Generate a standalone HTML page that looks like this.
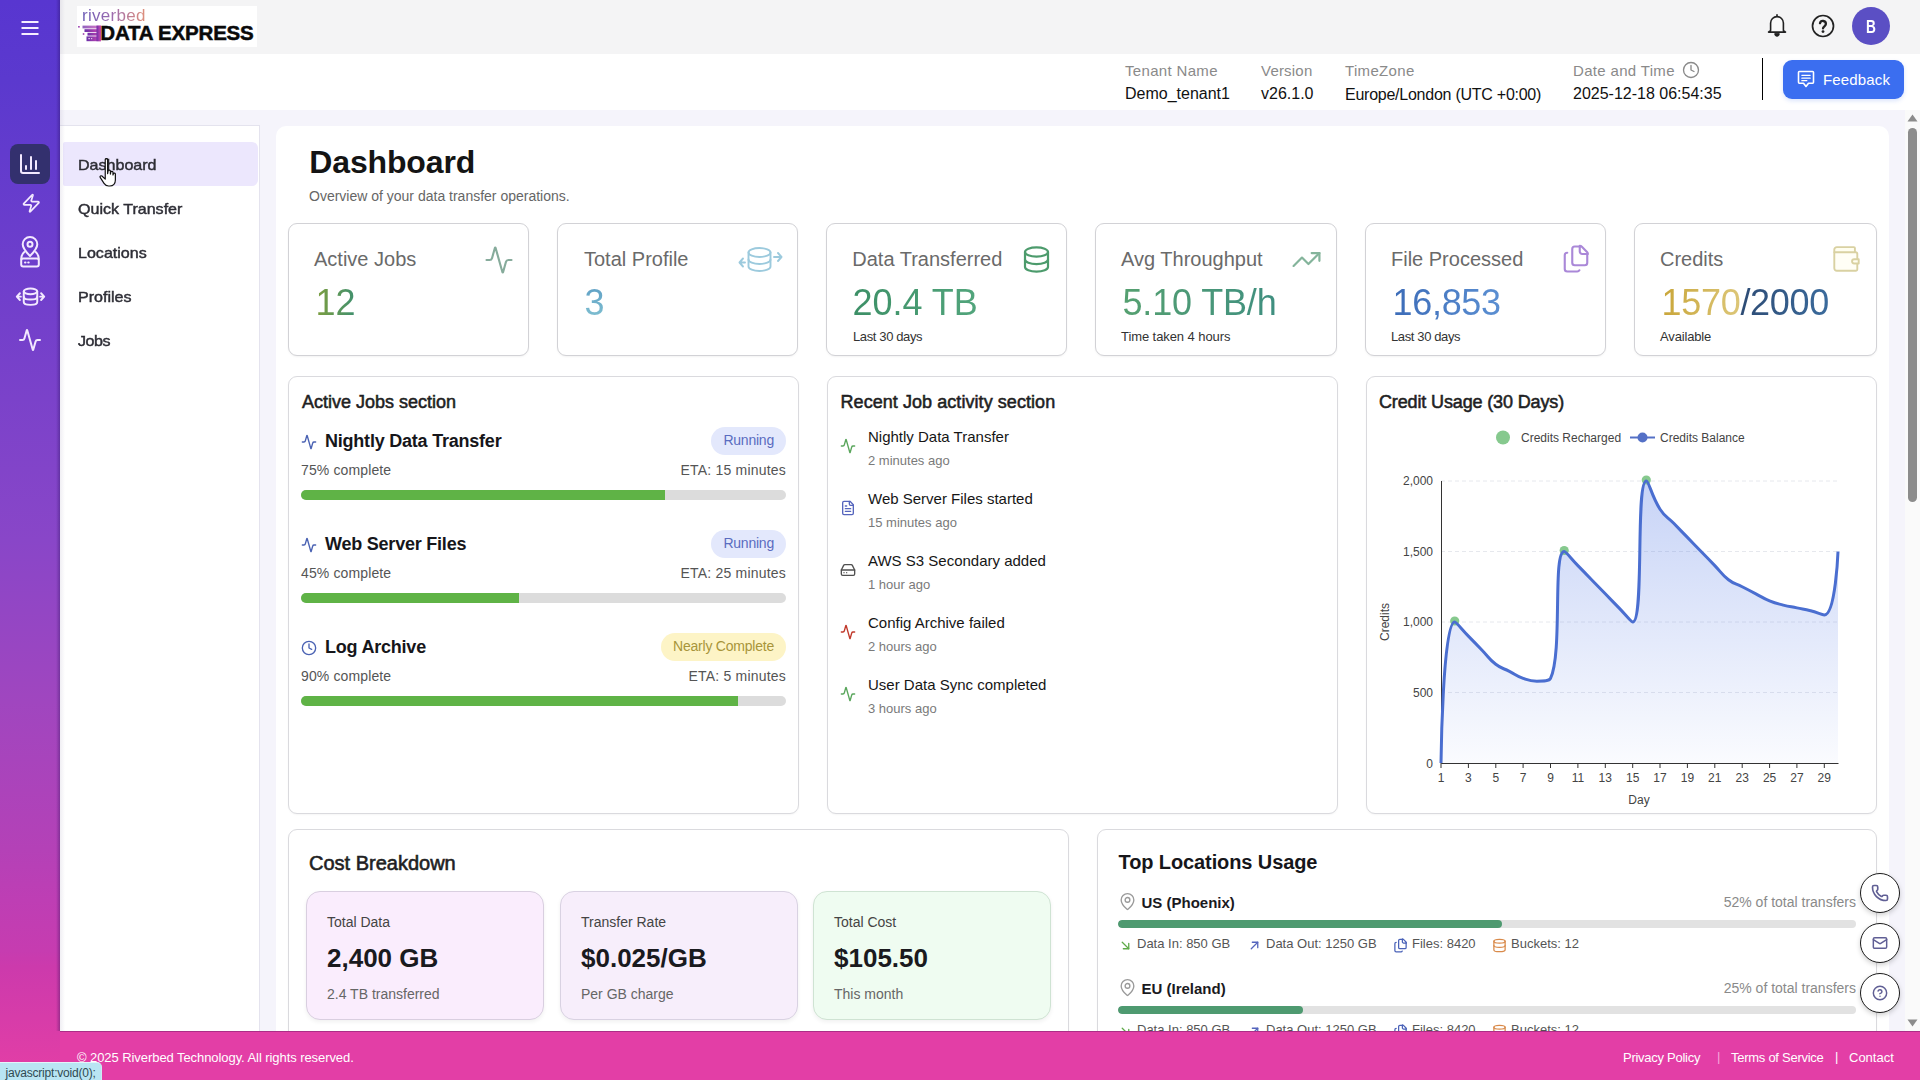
<!DOCTYPE html>
<html lang="en">
<head>
<meta charset="utf-8">
<title>Riverbed Data Express - Dashboard</title>
<style>
*{box-sizing:border-box;margin:0;padding:0}
html,body{width:1920px;height:1080px;overflow:hidden}
body{font-family:"Liberation Sans",sans-serif;position:relative;background:linear-gradient(180deg,#5836d0 0%,#5b39ce 7.400%,#8946c8 50%,#a046bf 65%,#b441b7 78.700%,#be3eb4 83.300%,#c63cb0 88%,#cc3aac 89.500%,#e23ea6 99%,#e23ea6 100%);color:#222}
.abs{position:absolute}
.t{position:absolute;white-space:nowrap;line-height:1}
svg{display:block;overflow:visible}
/* frame */
#topbar{left:60px;top:0;width:1860px;height:54px;background:#f4f4f5}
#infobar{left:60px;top:54px;width:1860px;height:56px;background:#fff}
#canvas{left:60px;top:110px;width:1860px;height:921px;background:#f5f4fb}
#navpanel{left:60px;top:125px;width:200px;height:906px;background:#fff;border-top:1px solid #e4e3ee;border-right:1px solid #e4e3ee}
#navsel{left:63px;top:142px;width:195px;height:44px;background:#ece7fd;border-radius:2px 6px 6px 2px}
#main{left:276px;top:126px;width:1613px;height:905px;background:#fff;border-radius:10px 10px 0 0}
#footer{left:0;top:1031px;width:1920px;height:49px}
#sbtrack{left:1905px;top:110px;width:15px;height:921px;background:#fafafa}
#sbthumb{left:1908px;top:128px;width:9px;height:374px;background:#8c8c8c;border-radius:5px}
.card{position:absolute;background:#fff;border:1px solid #d2d2d6;border-radius:9px;box-shadow:0 1px 2px rgba(0,0,0,.05)}
.sec{position:absolute;background:#fff;border:1px solid #dadade;border-radius:9px;box-shadow:0 1px 2px rgba(0,0,0,.04)}
.nv{font-size:15px;font-weight:400;color:#2e2e36;-webkit-text-stroke:0.45px #2e2e36;transform:scaleX(1.07);transform-origin:0 50%}
.cl{font-size:20px;color:#6a6a6a}
.cv{font-size:36px}
.cs{font-size:13px;color:#333}
.g{-webkit-background-clip:text;background-clip:text;color:transparent}
.sh{font-size:18px;font-weight:400;color:#1f1f23;-webkit-text-stroke:0.55px #1f1f23}
.jn{font-size:18px;font-weight:700;color:#16161a}
.jp{font-size:14px;color:#555}
.bdg{position:absolute;right:1134px;height:28px;line-height:27px;padding:0 12px;border-radius:14px;font-size:14px;letter-spacing:-0.22px;white-space:nowrap}
.run{background:#e3e8fc;color:#5a6cc0}
.near{background:#fdf4c6;color:#a8953a}
.pb{height:10px;border-radius:5px;background:#dcdcdc;overflow:hidden}
.pb i{display:block;height:100%;background:#5fb346}
.ra{font-size:15px;color:#161616}
.rb{font-size:13px;color:#7a7a7a}
.ax{font-size:12px;color:#444}
.ft{font-size:13px;color:#fff}
</style>
</head>
<body>
<div class="abs" id="topbar"></div>
<div class="abs" id="infobar"></div>
<div class="abs" id="canvas"></div>
<div class="abs" id="navpanel"></div>
<div class="abs" id="navsel"></div>
<div class="abs" id="main"></div>
<div class="abs" id="sbtrack"></div>
<div class="abs" id="sbthumb"></div>

<!--SIDEBAR-->
<svg class="abs" style="left:21px;top:20px" width="18" height="16" viewBox="0 0 18 16"><path d="M0.5 2h17M0.5 8h17M0.5 14h17" stroke="#f6eeff" stroke-width="2" fill="none"/></svg>
<div class="abs" style="left:10px;top:144px;width:40px;height:40px;border-radius:8px;background:#33306e"></div>
<svg class="abs" style="left:18px;top:152px" width="24" height="24" viewBox="0 0 24 24" fill="none" stroke="#f3e9ff" stroke-width="2" stroke-linecap="round" stroke-linejoin="round"><path d="M3 3v16a2 2 0 0 0 2 2h16"/><path d="M18 17V9"/><path d="M13 17V5"/><path d="M8 17v-3"/></svg>
<svg class="abs" style="left:20.700px;top:193px" width="20.500" height="20.500" viewBox="0 0 24 24" fill="none" stroke="#f3e9ff" stroke-width="2" stroke-linecap="round" stroke-linejoin="round"><path d="M4 14a1 1 0 0 1-.78-1.63l9.9-10.2a.5.5 0 0 1 .86.46l-1.92 6.02A1 1 0 0 0 13 10h7a1 1 0 0 1 .78 1.63l-9.9 10.2a.5.5 0 0 1-.86-.46l1.92-6.02A1 1 0 0 0 11 14z"/></svg>
<svg class="abs" style="left:18px;top:236px" width="24" height="32" viewBox="0 0 24 32" fill="none" stroke="#f3e9ff" stroke-width="2" stroke-linecap="round" stroke-linejoin="round"><path d="M12 20C8 16 4.700 12.500 4.700 8.300a7.300 7.300 0 0 1 14.600 0C19.300 12.500 16 16 12 20z"/><circle cx="12" cy="8.300" r="2.500"/><path d="M6.300 16C4.200 17.800 3.200 20.300 3.200 23"/><path d="M17.700 16c2.100 1.800 3.100 4.300 3.100 7"/><rect x="3.200" y="22.500" width="17.600" height="8" rx="2"/><path d="M7 26.500h.5M10.200 26.500h.5"/></svg>
<svg class="abs" style="left:15.500px;top:286.500px" width="29" height="19.300" viewBox="0 0 30 20" fill="none" stroke="#f3e9ff" stroke-width="2" stroke-linecap="round" stroke-linejoin="round"><ellipse cx="15" cy="4.500" rx="7" ry="3"/><path d="M8 4.500v11c0 1.700 3.100 3 7 3s7-1.300 7-3v-11"/><path d="M8 10c0 1.700 3.100 3 7 3s7-1.300 7-3"/><path d="M5 10H1.500M4 6.500.8 10 4 13.500"/><path d="M25 10h3.500M26 6.500 29.200 10 26 13.500"/></svg>
<svg class="abs" style="left:18px;top:328px" width="24" height="24" viewBox="0 0 24 24" fill="none" stroke="#f3e9ff" stroke-width="2" stroke-linecap="round" stroke-linejoin="round"><path d="M22 12h-2.480a2 2 0 0 0-1.930 1.460l-2.350 8.360a.25.250 0 0 1-.48 0L9.240 2.180a.25.250 0 0 0-.48 0l-2.350 8.360A2 2 0 0 1 4.490 12H2"/></svg>
<!--HEADER-->
<div class="abs" style="left:77px;top:6px;width:180px;height:41px;background:#fff"></div>
<div class="t" id="lg1" style="left:82px;top:7.200px;font-size:17px;letter-spacing:0.3px;background:linear-gradient(90deg,#6a5bb5 0%,#9a6ab0 45%,#e0907a 100%);-webkit-background-clip:text;background-clip:text;color:transparent">riverbed</div>
<svg class="abs" style="left:77px;top:25px" width="26" height="17" viewBox="0 0 26 17"><defs><linearGradient id="lgd" x1="0" y1="0" x2="1" y2="0"><stop offset="0" stop-color="#6a2fa8"/><stop offset="1" stop-color="#d04ab4"/></linearGradient></defs><g fill="url(#lgd)"><rect x="1.200" y="1" width="1.600" height="1.600"/><rect x="5.500" y="0.600" width="18.500" height="2.800" opacity=".75"/><rect x="7.500" y="4.200" width="16" height="2.800"/><rect x="5.800" y="8.200" width="1.600" height="1.600"/><rect x="10.500" y="7.800" width="13.500" height="2.800"/><rect x="9.500" y="11.400" width="14.500" height="4.800"/><rect x="19.500" y="0.600" width="4.500" height="15.600"/></g><rect x="11.500" y="13" width="1.200" height="1.200" fill="#fff"/><rect x="14" y="13" width="1.200" height="1.200" fill="#fff" opacity=".7"/></svg>
<div class="t" id="lg2" style="-webkit-text-stroke:0.5px #0a0a0a;left:100.300px;top:23.100px;font-size:20.500px;font-weight:700;color:#0a0a0a;letter-spacing:-0.2px">DATA EXPRESS</div>
<svg class="abs" style="left:1765px;top:13px" width="24" height="24" viewBox="0 0 24 24" fill="none" stroke="#222" stroke-width="1.600" stroke-linecap="round" stroke-linejoin="round"><path d="M12 1.800v1.400"/><path d="M5.600 17.500V10a6.400 6.400 0 0 1 12.800 0v7.500l2.100 1.600H3.500z" fill="#fafafa"/><path d="M9.700 21a2.300 2.300 0 0 0 4.600 0z" fill="#222" stroke-width="1"/></svg>
<svg class="abs" style="left:1811px;top:14px" width="24" height="24" viewBox="0 0 24 24" fill="none" stroke="#222" stroke-width="1.700" stroke-linecap="round" stroke-linejoin="round"><circle cx="12" cy="12" r="10.500"/><path d="M9 9.200a3 3 0 0 1 5.900.8c0 2-2.900 2.500-2.900 4.400" stroke-width="2.300"/><path d="M12 17.600h.01" stroke-width="2.800"/></svg>
<div class="abs" style="left:1852px;top:7px;width:38px;height:38px;border-radius:50%;background:#5b4fc4"></div>
<div class="t" id="avB" style="left:1851px;width:40px;text-align:center;top:17.500px;font-size:18px;font-weight:700;color:#fff;transform:scaleX(.76)">B</div>

<div class="t" id="h1a" style="left:1125px;top:63px;font-size:15px;color:#8a8a8a;letter-spacing:0.33px">Tenant Name</div>
<div class="t" id="h1b" style="left:1125px;top:86px;font-size:16px;color:#111">Demo_tenant1</div>
<div class="t" id="h2a" style="left:1261px;top:63px;font-size:15px;color:#8a8a8a;letter-spacing:0.2px">Version</div>
<div class="t" id="h2b" style="left:1261px;top:86px;font-size:16px;color:#111">v26.1.0</div>
<div class="t" id="h3a" style="left:1345px;top:63px;font-size:15px;color:#8a8a8a;letter-spacing:0.33px">TimeZone</div>
<div class="t" id="h3b" style="left:1345px;top:87px;font-size:16px;color:#111;letter-spacing:-0.25px">Europe/London (UTC +0:00)</div>
<div class="t" id="h4a" style="left:1573px;top:63px;font-size:15px;color:#8a8a8a;letter-spacing:0.33px">Date and Time</div>
<svg class="abs" style="left:1682px;top:61px" width="18" height="18" viewBox="0 0 24 24" fill="none" stroke="#8a8a8a" stroke-width="1.800" stroke-linecap="round" stroke-linejoin="round"><circle cx="12" cy="12" r="10"/><path d="M12 6v6l4 2"/></svg>
<div class="t" id="h4b" style="left:1573px;top:86px;font-size:16px;color:#111">2025-12-18 06:54:35</div>
<div class="abs" style="left:1762px;top:58px;width:1px;height:42px;background:#000"></div>
<div class="abs" style="left:1783px;top:60px;width:121px;height:39px;border-radius:9px;background:#3b6ef0;box-shadow:0 2px 4px rgba(59,110,240,.18)"></div>
<svg class="abs" style="left:1796px;top:69px" width="20" height="20" viewBox="0 0 24 24" fill="none" stroke="#fff" stroke-width="1.900" stroke-linecap="round" stroke-linejoin="round"><path d="M4 3h16a1 1 0 0 1 1 1v12a1 1 0 0 1-1 1h-5l-3 4-3-4H4a1 1 0 0 1-1-1V4a1 1 0 0 1 1-1z"/><path d="M7 7.500h10M7 11h10M7 14h6" stroke-width="1.500"/></svg>
<div class="t" id="fbk" style="left:1823px;top:72px;font-size:15px;color:#fff;letter-spacing:0.15px">Feedback</div>
<!--NAV-->
<div class="t nv" id="n1" style="left:78px;top:157px">Dashboard</div>
<div class="t nv" id="n2" style="left:78px;top:201px">Quick Transfer</div>
<div class="t nv" id="n3" style="left:78px;top:245px">Locations</div>
<div class="t nv" id="n4" style="left:78px;top:289px">Profiles</div>
<div class="t nv" id="n5" style="left:78px;top:333px;letter-spacing:-0.45px">Jobs</div>
<svg class="abs" style="left:99px;top:158.300px" width="18" height="29.500" viewBox="0 0 19 32"><path d="M6.500 1.500c0-1 2.600-1 2.600 0v15.500l.6-3.200c.2-.9 2.400-.7 2.400.3v3.300l.5-2.300c.2-.9 2.300-.6 2.300.4v2.900l.5-1.500c.3-.9 2.100-.5 2.100.5v6.500c0 3.700-2.300 6.500-6 6.500h-1.400c-2.300 0-3.700-1-4.900-2.800L1 21c-.7-1.100.9-2.300 1.900-1.400l3.600 3.300z" fill="#fff" stroke="#111" stroke-width="1.300" stroke-linejoin="round"/></svg>
<!--TITLE-->
<div class="t" id="ttl" style="left:309.300px;top:146px;font-size:32px;font-weight:700;color:#141414;letter-spacing:-0.15px">Dashboard</div>
<div class="t" id="sub" style="left:309px;top:189px;font-size:14px;color:#666">Overview of your data transfer operations.</div>
<!--CARDS-->
<div class="card" style="left:288px;top:223px;width:241px;height:133px"></div>
<div class="t cl" id="cl1" style="left:314px;top:249px">Active Jobs</div>
<div class="t cv" id="cv1" style="left:315.5px;top:285px"><span class="g" style="background-image:linear-gradient(90deg,#7d9e3e,#3f9070)">12</span></div>
<svg class="abs" style="left:484px;top:245px" width="30" height="30" viewBox="0 0 24 24" fill="none" stroke="#86ab9b" stroke-width="1.700" stroke-linecap="round" stroke-linejoin="round"><path d="M22 12h-2.480a2 2 0 0 0-1.930 1.460l-2.350 8.360a.25.250 0 0 1-.48 0L9.240 2.180a.25.250 0 0 0-.48 0l-2.350 8.360A2 2 0 0 1 4.490 12H2"/></svg>
<div class="card" style="left:557px;top:223px;width:241px;height:133px"></div>
<div class="t cl" id="cl2" style="left:584px;top:249px">Total Profile</div>
<div class="t cv" id="cv2" style="left:584.5px;top:285px"><span class="g" style="background-image:linear-gradient(180deg,#5b9cc4,#84c4d2)">3</span></div>
<svg class="abs" style="left:738px;top:246px" width="46" height="28" viewBox="0 0 46 28" fill="none" stroke="#9ccadd" stroke-width="1.900" stroke-linecap="round" stroke-linejoin="round"><ellipse cx="21.500" cy="6.500" rx="11" ry="4.500"/><path d="M10.500 6.500v14c0 2.500 4.900 4.500 11 4.500s11-2 11-4.500v-14"/><path d="M10.500 13.500c0 2.500 4.900 4.500 11 4.500s11-2 11-4.500"/><path d="M7 16.500H2.500M5 12.500 1.500 16.500l3.500 4"/><path d="M36 11H42.500M40 7l3.500 4-3.500 4"/></svg>
<div class="card" style="left:826px;top:223px;width:241px;height:133px"></div>
<div class="t cl" id="cl3" style="left:852.300px;top:249px">Data Transferred</div>
<div class="t cv" id="cv3" style="left:852.400px;top:285px"><span class="g" style="background-image:linear-gradient(90deg,#3c8f66,#52a57c)">20.4 TB</span></div>
<div class="t cs" id="cs3" style="left:853px;top:330px;letter-spacing:-0.38px">Last 30 days</div>
<svg class="abs" style="left:1022.500px;top:245.500px" width="27" height="27" viewBox="0 0 27 27" fill="none" stroke="#4c9b6c" stroke-width="2.200" stroke-linecap="round" stroke-linejoin="round"><ellipse cx="13.500" cy="6" rx="11.500" ry="4.600"/><path d="M2 6v15c0 2.500 5.100 4.600 11.500 4.600S25 23.500 25 21V6"/><path d="M2 13.500c0 2.500 5.100 4.600 11.500 4.600S25 16 25 13.500"/></svg>
<div class="card" style="left:1095px;top:223px;width:242px;height:133px"></div>
<div class="t cl" id="cl4" style="left:1121px;top:249px">Avg Throughput</div>
<div class="t cv" id="cv4" style="left:1122.5px;top:285px;letter-spacing:-0.15px"><span class="g" style="background-image:linear-gradient(90deg,#55a070,#3f8f80)">5.10 TB/h</span></div>
<div class="t cs" id="cs4" style="left:1121px;top:330px;letter-spacing:-0.08px">Time taken 4 hours</div>
<svg class="abs" style="left:1291px;top:244px" width="31" height="31" viewBox="0 0 24 24" fill="none" stroke="#84b49b" stroke-width="1.700" stroke-linecap="round" stroke-linejoin="round"><path d="M22 7 13.500 15.500l-5-5L2 17"/><path d="M16 7h6v6"/></svg>
<div class="card" style="left:1365px;top:223px;width:241px;height:133px"></div>
<div class="t cl" id="cl5" style="left:1391px;top:249px">File Processed</div>
<div class="t cv" id="cv5" style="left:1392.5px;top:285px;letter-spacing:-0.3px"><span class="g" style="background-image:linear-gradient(90deg,#3c6cb8,#5b8fd2)">16,853</span></div>
<div class="t cs" id="cs5" style="left:1391px;top:330px;letter-spacing:-0.38px">Last 30 days</div>
<svg class="abs" style="left:1561px;top:244px" width="30" height="30" viewBox="0 0 24 24" fill="none" stroke="#aa88d8" stroke-width="1.700" stroke-linecap="round" stroke-linejoin="round"><path d="M15 2h-4a2 2 0 0 0-2 2v11a2 2 0 0 0 2 2h8a2 2 0 0 0 2-2V8"/><path d="M16.700 2.200a2.400 2.400 0 0 0-1.700-.7V6a2 2 0 0 0 2 2h4.500a2.400 2.400 0 0 0-.7-1.700z" /><path d="M5 7a2 2 0 0 0-2 2v11a2 2 0 0 0 2 2h8a2 2 0 0 0 1.700-1"/></svg>
<div class="card" style="left:1634px;top:223px;width:243px;height:133px"></div>
<div class="t cl" id="cl6" style="left:1660px;top:249px">Credits</div>
<div class="t cv" id="cv6" style="left:1661.5px;top:285px;letter-spacing:-0.3px"><span class="g" style="background-image:linear-gradient(90deg,#c9a63a,#dcc678)">1570</span><span class="g" style="background-image:linear-gradient(90deg,#2d4b74,#3b6b9c)">/2000</span></div>
<div class="t cs" id="cs6" style="left:1660px;top:330px;letter-spacing:-0.15px">Available</div>
<svg class="abs" style="left:1833px;top:246px" width="27" height="26" viewBox="0 0 27 26" fill="none" stroke="#d9d1a2" stroke-width="1.900" stroke-linecap="round" stroke-linejoin="round"><path d="M1.300 6.300V3.600a2.500 2.500 0 0 1 2.500-2.500H20.900a1 1 0 0 1 1 1V6.300" fill="#fffef0"/><path d="M1.300 6.300H22.800a1.500 1.500 0 0 1 1.500 1.500V23.200a1.500 1.500 0 0 1-1.500 1.500H3.800a2.500 2.500 0 0 1-2.500-2.500z" fill="#fffef6"/><path d="M25.700 13.200H21.200a2.150 2.150 0 0 0 0 4.300H25.700z" fill="#fffef0"/></svg>
<!--ACTIVE-->
<div class="sec" style="left:288px;top:376px;width:511px;height:438px"></div>
<div class="t sh" id="sh1" style="left:302px;top:393.300px;font-size:18px;letter-spacing:0px">Active Jobs section</div>
<svg class="abs" style="left:301px;top:433.750px" width="16" height="16" viewBox="0 0 24 24" fill="none" stroke="#4a62b3" stroke-width="2" stroke-linecap="round" stroke-linejoin="round"><path d="M22 12h-2.480a2 2 0 0 0-1.930 1.460l-2.350 8.360a.25.250 0 0 1-.48 0L9.240 2.180a.25.250 0 0 0-.48 0l-2.350 8.360A2 2 0 0 1 4.490 12H2"/></svg>
<div class="t jn" id="jn0" style="left:325px;top:432.2px;letter-spacing:-0.22px">Nightly Data Transfer</div>
<div class="bdg run" id="bd0" style="top:427px">Running</div>
<div class="t jp" id="jp0" style="left:301px;top:463px;letter-spacing:0.13px">75% complete</div>
<div class="t jp" id="je0" style="right:1134px;top:463px;letter-spacing:0.2px">ETA: 15 minutes</div>
<div class="abs pb" style="left:301px;top:490px;width:485px"><i style="width:75%"></i></div>
<svg class="abs" style="left:301px;top:536.750px" width="16" height="16" viewBox="0 0 24 24" fill="none" stroke="#4a62b3" stroke-width="2" stroke-linecap="round" stroke-linejoin="round"><path d="M22 12h-2.480a2 2 0 0 0-1.930 1.460l-2.350 8.360a.25.250 0 0 1-.48 0L9.240 2.180a.25.250 0 0 0-.48 0l-2.350 8.360A2 2 0 0 1 4.490 12H2"/></svg>
<div class="t jn" id="jn1" style="left:325px;top:535.2px;letter-spacing:-0.22px">Web Server Files</div>
<div class="bdg run" id="bd1" style="top:530px">Running</div>
<div class="t jp" id="jp1" style="left:301px;top:566px;letter-spacing:0.13px">45% complete</div>
<div class="t jp" id="je1" style="right:1134px;top:566px;letter-spacing:0.2px">ETA: 25 minutes</div>
<div class="abs pb" style="left:301px;top:593px;width:485px"><i style="width:45%"></i></div>
<svg class="abs" style="left:301px;top:639.750px" width="16" height="16" viewBox="0 0 24 24" fill="none" stroke="#4a62b3" stroke-width="2" stroke-linecap="round" stroke-linejoin="round"><circle cx="12" cy="12" r="10"/><path d="M12 6v6l4 2"/></svg>
<div class="t jn" id="jn2" style="left:325px;top:638.2px;letter-spacing:-0.22px">Log Archive</div>
<div class="bdg near" id="bd2" style="top:633px">Nearly Complete</div>
<div class="t jp" id="jp2" style="left:301px;top:669px;letter-spacing:0.13px">90% complete</div>
<div class="t jp" id="je2" style="right:1134px;top:669px;letter-spacing:0.2px">ETA: 5 minutes</div>
<div class="abs pb" style="left:301px;top:696px;width:485px"><i style="width:90%"></i></div>
<!--RECENT-->
<div class="sec" style="left:827px;top:376px;width:511px;height:438px"></div>
<div class="t sh" id="sh2" style="left:840.500px;top:393.300px;font-size:18px;letter-spacing:0.06px">Recent Job activity section</div>
<svg class="abs" style="left:840px;top:438px" width="16" height="16" viewBox="0 0 24 24" fill="none" stroke="#5aa65c" stroke-width="2" stroke-linecap="round" stroke-linejoin="round"><path d="M22 12h-2.480a2 2 0 0 0-1.930 1.460l-2.350 8.360a.25.250 0 0 1-.48 0L9.240 2.180a.25.250 0 0 0-.48 0l-2.350 8.360A2 2 0 0 1 4.490 12H2"/></svg>
<div class="t ra" id="ra0" style="left:868px;top:429px">Nightly Data Transfer</div>
<div class="t rb" id="rb0" style="left:868px;top:454px">2 minutes ago</div>
<svg class="abs" style="left:840px;top:500px" width="16" height="16" viewBox="0 0 24 24" fill="none" stroke="#5565bd" stroke-width="2" stroke-linecap="round" stroke-linejoin="round"><path d="M15 2H6a2 2 0 0 0-2 2v16a2 2 0 0 0 2 2h12a2 2 0 0 0 2-2V7z"/><path d="M14 2v4a2 2 0 0 0 2 2h4"/><path d="M10 9H8"/><path d="M16 13H8"/><path d="M16 17H8"/></svg>
<div class="t ra" id="ra1" style="left:868px;top:491px">Web Server Files started</div>
<div class="t rb" id="rb1" style="left:868px;top:516px">15 minutes ago</div>
<svg class="abs" style="left:840px;top:562px" width="16" height="16" viewBox="0 0 24 24" fill="none" stroke="#505050" stroke-width="2" stroke-linecap="round" stroke-linejoin="round"><line x1="22" x2="2" y1="12" y2="12"/><path d="M5.450 5.110 2 12v6a2 2 0 0 0 2 2h16a2 2 0 0 0 2-2v-6l-3.450-6.890A2 2 0 0 0 16.760 4H7.240a2 2 0 0 0-1.790 1.110z"/><line x1="6" x2="6.010" y1="16" y2="16"/><line x1="10" x2="10.010" y1="16" y2="16"/></svg>
<div class="t ra" id="ra2" style="left:868px;top:553px">AWS S3 Secondary added</div>
<div class="t rb" id="rb2" style="left:868px;top:578px">1 hour ago</div>
<svg class="abs" style="left:840px;top:624px" width="16" height="16" viewBox="0 0 24 24" fill="none" stroke="#c0392b" stroke-width="2" stroke-linecap="round" stroke-linejoin="round"><path d="M22 12h-2.480a2 2 0 0 0-1.930 1.460l-2.350 8.360a.25.250 0 0 1-.48 0L9.240 2.180a.25.250 0 0 0-.48 0l-2.350 8.360A2 2 0 0 1 4.490 12H2"/></svg>
<div class="t ra" id="ra3" style="left:868px;top:615px">Config Archive failed</div>
<div class="t rb" id="rb3" style="left:868px;top:640px">2 hours ago</div>
<svg class="abs" style="left:840px;top:686px" width="16" height="16" viewBox="0 0 24 24" fill="none" stroke="#5aa65c" stroke-width="2" stroke-linecap="round" stroke-linejoin="round"><path d="M22 12h-2.480a2 2 0 0 0-1.930 1.460l-2.350 8.360a.25.250 0 0 1-.48 0L9.240 2.180a.25.250 0 0 0-.48 0l-2.350 8.360A2 2 0 0 1 4.490 12H2"/></svg>
<div class="t ra" id="ra4" style="left:868px;top:677px">User Data Sync completed</div>
<div class="t rb" id="rb4" style="left:868px;top:702px">3 hours ago</div>
<!--CHART-->
<div class="sec" style="left:1366px;top:376px;width:511px;height:438px"></div>
<div class="t sh" id="sh3" style="left:1379px;top:393.300px;font-size:18px;letter-spacing:-0.14px">Credit Usage (30 Days)</div>
<svg class="abs" style="left:0;top:0" width="1920" height="1080" viewBox="0 0 1920 1080">
<defs><linearGradient id="ag" x1="0" y1="481" x2="0" y2="763" gradientUnits="userSpaceOnUse"><stop offset="0" stop-color="#5b7fe6" stop-opacity=".34"/><stop offset="1" stop-color="#5b7fe6" stop-opacity=".03"/></linearGradient></defs>
<path d="M1441 692.5H1838" stroke="#dfe2e8" stroke-width="0.800" stroke-dasharray="4 3"/>
<path d="M1441 622.0H1838" stroke="#dfe2e8" stroke-width="0.800" stroke-dasharray="4 3"/>
<path d="M1441 551.5H1838" stroke="#dfe2e8" stroke-width="0.800" stroke-dasharray="4 3"/>
<path d="M1441 481.0H1838" stroke="#dfe2e8" stroke-width="0.800" stroke-dasharray="4 3"/>
<path d="M1441.00,763.00 C1441.00,763.00 1442.67,622.00 1454.69,622.00 C1456.36,622.00 1461.54,629.05 1468.38,636.10 C1475.23,643.15 1475.22,643.15 1482.07,650.20 C1488.91,657.25 1488.08,658.37 1495.76,664.30 C1501.77,668.95 1502.61,667.83 1509.45,671.35 C1516.30,674.88 1515.96,675.81 1523.14,678.40 C1529.65,680.75 1529.98,681.22 1536.83,681.22 C1543.67,681.22 1549.17,681.22 1550.52,678.40 C1562.86,652.65 1552.35,551.50 1564.21,551.50 C1566.04,551.50 1571.06,558.55 1577.90,565.60 C1584.75,572.65 1584.74,572.65 1591.59,579.70 C1598.43,586.75 1598.43,586.75 1605.28,593.80 C1612.12,600.85 1612.12,600.85 1618.97,607.90 C1625.82,614.95 1630.99,622.00 1632.66,622.00 C1644.68,622.00 1635.14,481.00 1646.35,481.00 C1648.83,481.00 1651.63,496.20 1660.04,509.20 C1665.32,517.35 1666.88,516.25 1673.73,523.30 C1680.58,530.35 1680.58,530.35 1687.42,537.40 C1694.27,544.45 1694.27,544.45 1701.11,551.50 C1707.96,558.55 1707.95,558.55 1714.80,565.60 C1721.64,572.65 1720.81,573.77 1728.49,579.70 C1734.50,584.35 1735.34,583.23 1742.18,586.75 C1749.03,590.27 1749.02,590.27 1755.87,593.80 C1762.71,597.33 1762.47,597.93 1769.56,600.85 C1776.16,603.57 1776.32,603.30 1783.25,605.08 C1790.01,606.82 1790.10,606.49 1796.94,607.90 C1803.79,609.31 1803.87,608.98 1810.63,610.72 C1817.56,612.50 1821.84,614.95 1824.32,614.95 C1835.53,614.95 1838.01,551.50 1838.01,551.50 L1838,763 L1441,763 Z" fill="url(#ag)"/>
<path d="M1441.500 481V763.500H1838.500" fill="none" stroke="#333" stroke-width="1"/>
<circle cx="1454.7" cy="621.0" r="4.600" fill="#86c98e"/>
<circle cx="1564.2" cy="550.5" r="4.600" fill="#86c98e"/>
<circle cx="1646.3" cy="480.0" r="4.600" fill="#86c98e"/>
<path d="M1441.00,763.00 C1441.00,763.00 1442.67,622.00 1454.69,622.00 C1456.36,622.00 1461.54,629.05 1468.38,636.10 C1475.23,643.15 1475.22,643.15 1482.07,650.20 C1488.91,657.25 1488.08,658.37 1495.76,664.30 C1501.77,668.95 1502.61,667.83 1509.45,671.35 C1516.30,674.88 1515.96,675.81 1523.14,678.40 C1529.65,680.75 1529.98,681.22 1536.83,681.22 C1543.67,681.22 1549.17,681.22 1550.52,678.40 C1562.86,652.65 1552.35,551.50 1564.21,551.50 C1566.04,551.50 1571.06,558.55 1577.90,565.60 C1584.75,572.65 1584.74,572.65 1591.59,579.70 C1598.43,586.75 1598.43,586.75 1605.28,593.80 C1612.12,600.85 1612.12,600.85 1618.97,607.90 C1625.82,614.95 1630.99,622.00 1632.66,622.00 C1644.68,622.00 1635.14,481.00 1646.35,481.00 C1648.83,481.00 1651.63,496.20 1660.04,509.20 C1665.32,517.35 1666.88,516.25 1673.73,523.30 C1680.58,530.35 1680.58,530.35 1687.42,537.40 C1694.27,544.45 1694.27,544.45 1701.11,551.50 C1707.96,558.55 1707.95,558.55 1714.80,565.60 C1721.64,572.65 1720.81,573.77 1728.49,579.70 C1734.50,584.35 1735.34,583.23 1742.18,586.75 C1749.03,590.27 1749.02,590.27 1755.87,593.80 C1762.71,597.33 1762.47,597.93 1769.56,600.85 C1776.16,603.57 1776.32,603.30 1783.25,605.08 C1790.01,606.82 1790.10,606.49 1796.94,607.90 C1803.79,609.31 1803.87,608.98 1810.63,610.72 C1817.56,612.50 1821.84,614.95 1824.32,614.95 C1835.53,614.95 1838.01,551.50 1838.01,551.50" fill="none" stroke="#4a6ed0" stroke-width="3" stroke-linejoin="round"/>
<path d="M1441.0 763v5M1468.4 763v5M1495.8 763v5M1523.1 763v5M1550.5 763v5M1577.9 763v5M1605.3 763v5M1632.7 763v5M1660.0 763v5M1687.4 763v5M1714.8 763v5M1742.2 763v5M1769.6 763v5M1796.9 763v5M1824.3 763v5" stroke="#333" stroke-width="1"/>
<circle cx="1503" cy="437.500" r="7" fill="#86c98e"/>
<path d="M1630 437.500h25" stroke="#5470c6" stroke-width="2"/><circle cx="1642.500" cy="437.500" r="5" fill="#5470c6"/>
</svg>
<div class="t ax" style="right:487px;top:758.300px">0</div>
<div class="t ax" style="right:487px;top:686.5px">500</div>
<div class="t ax" style="right:487px;top:616.0px">1,000</div>
<div class="t ax" style="right:487px;top:545.5px">1,500</div>
<div class="t ax" style="right:487px;top:475.0px">2,000</div>
<div class="t ax" style="left:1421.0px;width:40px;text-align:center;top:772px">1</div>
<div class="t ax" style="left:1448.4px;width:40px;text-align:center;top:772px">3</div>
<div class="t ax" style="left:1475.8px;width:40px;text-align:center;top:772px">5</div>
<div class="t ax" style="left:1503.1px;width:40px;text-align:center;top:772px">7</div>
<div class="t ax" style="left:1530.5px;width:40px;text-align:center;top:772px">9</div>
<div class="t ax" style="left:1557.9px;width:40px;text-align:center;top:772px">11</div>
<div class="t ax" style="left:1585.3px;width:40px;text-align:center;top:772px">13</div>
<div class="t ax" style="left:1612.7px;width:40px;text-align:center;top:772px">15</div>
<div class="t ax" style="left:1640.0px;width:40px;text-align:center;top:772px">17</div>
<div class="t ax" style="left:1667.4px;width:40px;text-align:center;top:772px">19</div>
<div class="t ax" style="left:1694.8px;width:40px;text-align:center;top:772px">21</div>
<div class="t ax" style="left:1722.2px;width:40px;text-align:center;top:772px">23</div>
<div class="t ax" style="left:1749.6px;width:40px;text-align:center;top:772px">25</div>
<div class="t ax" style="left:1776.9px;width:40px;text-align:center;top:772px">27</div>
<div class="t ax" style="left:1804.3px;width:40px;text-align:center;top:772px">29</div>
<div class="t ax" id="axd" style="left:1619px;width:40px;text-align:center;top:794px">Day</div>
<div class="t ax" id="axc" style="left:1365px;top:616px;width:40px;text-align:center;transform:rotate(-90deg)">Credits</div>
<div class="t ax" id="lgA" style="left:1521px;top:432px">Credits Recharged</div>
<div class="t ax" id="lgB" style="left:1660px;top:432px">Credits Balance</div>
<!--COST-->
<div class="abs" style="left:276px;top:820px;width:1613px;height:211px;overflow:hidden">
<div class="sec" style="left:12px;top:9px;width:781px;height:260px"></div>
<div class="t" id="cbh" style="left:33px;top:32.500px;font-size:20px;font-weight:400;color:#1f1f23;-webkit-text-stroke:0.6px #1f1f23;letter-spacing:0px">Cost Breakdown</div>
<div class="abs" style="left:30px;top:71px;width:238px;height:129px;border-radius:14px;background:#faedfd;border:1px solid #d9cfe0;box-shadow:0 2px 4px rgba(0,0,0,.06)"></div>
<div class="t" id="ca0" style="left:51px;top:95px;font-size:14px;color:#444">Total Data</div>
<div class="t" id="cb0" style="left:51px;top:124.5px;font-size:26px;font-weight:700;color:#1a1a1e">2,400 GB</div>
<div class="t" id="cc0" style="left:51px;top:167px;font-size:14px;color:#666">2.4 TB transferred</div>
<div class="abs" style="left:284px;top:71px;width:238px;height:129px;border-radius:14px;background:#f7eefb;border:1px solid #d9d2e2;box-shadow:0 2px 4px rgba(0,0,0,.06)"></div>
<div class="t" id="ca1" style="left:305px;top:95px;font-size:14px;color:#444">Transfer Rate</div>
<div class="t" id="cb1" style="left:305px;top:124.5px;font-size:26px;font-weight:700;color:#1a1a1e">$0.025/GB</div>
<div class="t" id="cc1" style="left:305px;top:167px;font-size:14px;color:#666">Per GB charge</div>
<div class="abs" style="left:537px;top:71px;width:238px;height:129px;border-radius:14px;background:#effcf1;border:1px solid #cfe3d3;box-shadow:0 2px 4px rgba(0,0,0,.06)"></div>
<div class="t" id="ca2" style="left:558px;top:95px;font-size:14px;color:#444">Total Cost</div>
<div class="t" id="cb2" style="left:558px;top:124.5px;font-size:26px;font-weight:700;color:#1a1a1e">$105.50</div>
<div class="t" id="cc2" style="left:558px;top:167px;font-size:14px;color:#666">This month</div>
<div class="sec" style="left:821px;top:9px;width:780px;height:260px"></div>
<div class="t" id="tlh" style="left:842.500px;top:32px;font-size:20px;font-weight:700;color:#16161a;letter-spacing:-0.1px">Top Locations Usage</div>
<svg class="abs" style="left:842px;top:72px" width="19" height="19" viewBox="0 0 24 24" fill="none" stroke="#9a9a9a" stroke-width="1.7" stroke-linecap="round" stroke-linejoin="round"><path d="M20 10c0 4.990-5.540 10.190-7.400 11.800a1 1 0 0 1-1.200 0C9.540 20.190 4 14.990 4 10a8 8 0 0 1 16 0"/><circle cx="12" cy="10" r="3"/></svg>
<div class="t" id="ln0" style="left:865.500px;top:74.6px;font-size:15px;font-weight:700;color:#1a1a1e">US (Phoenix)</div>
<div class="t" id="lp0" style="right:33px;top:75px;font-size:14px;color:#8a8a8a">52% of total transfers</div>
<div class="abs" style="left:842px;top:100px;width:738px;height:8px;border-radius:4px;background:#e2e2e2;overflow:hidden"><i style="display:block;height:100%;width:52%;background:#4e9a70;border-radius:4px"></i></div>
<svg class="abs" style="left:843px;top:118.5px" width="13" height="13" viewBox="0 0 24 24" fill="none" stroke="#5faa4a" stroke-width="2.4" stroke-linecap="round" stroke-linejoin="round"><path d="M6 6l12 12"/><path d="M18 8v10H8"/></svg>
<svg class="abs" style="left:972px;top:118.5px" width="13" height="13" viewBox="0 0 24 24" fill="none" stroke="#5565bd" stroke-width="2.4" stroke-linecap="round" stroke-linejoin="round"><path d="M6 18L18 6"/><path d="M8 6h10v10"/></svg>
<svg class="abs" style="left:1117px;top:118px" width="15" height="15" viewBox="0 0 24 24" fill="none" stroke="#4a62b8" stroke-width="2" stroke-linecap="round" stroke-linejoin="round"><path d="M15 2h-4a2 2 0 0 0-2 2v11a2 2 0 0 0 2 2h8a2 2 0 0 0 2-2V8"/><path d="M16.700 2.200a2.400 2.400 0 0 0-1.700-.7V6a2 2 0 0 0 2 2h4.500a2.400 2.400 0 0 0-.7-1.700z"/><path d="M5 7a2 2 0 0 0-2 2v11a2 2 0 0 0 2 2h8a2 2 0 0 0 1.700-1"/></svg>
<svg class="abs" style="left:1216px;top:118px" width="15" height="15" viewBox="0 0 24 24" fill="none" stroke="#d98a4a" stroke-width="2" stroke-linecap="round" stroke-linejoin="round"><ellipse cx="12" cy="5" rx="9" ry="3"/><path d="M3 5v14a9 3 0 0 0 18 0V5"/><path d="M3 12a9 3 0 0 0 18 0"/></svg>
<div class="t" id="ls00" style="left:861px;top:116.75px;font-size:13px;color:#555">Data In: 850 GB</div>
<div class="t" id="ls01" style="left:990px;top:116.75px;font-size:13px;color:#555">Data Out: 1250 GB</div>
<div class="t" id="ls02" style="left:1136px;top:116.75px;font-size:13px;color:#555">Files: 8420</div>
<div class="t" id="ls03" style="left:1235px;top:116.75px;font-size:13px;color:#555">Buckets: 12</div>
<svg class="abs" style="left:842px;top:158px" width="19" height="19" viewBox="0 0 24 24" fill="none" stroke="#9a9a9a" stroke-width="1.7" stroke-linecap="round" stroke-linejoin="round"><path d="M20 10c0 4.990-5.540 10.190-7.400 11.800a1 1 0 0 1-1.200 0C9.540 20.190 4 14.990 4 10a8 8 0 0 1 16 0"/><circle cx="12" cy="10" r="3"/></svg>
<div class="t" id="ln1" style="left:865.500px;top:160.6px;font-size:15px;font-weight:700;color:#1a1a1e">EU (Ireland)</div>
<div class="t" id="lp1" style="right:33px;top:161px;font-size:14px;color:#8a8a8a">25% of total transfers</div>
<div class="abs" style="left:842px;top:186px;width:738px;height:8px;border-radius:4px;background:#e2e2e2;overflow:hidden"><i style="display:block;height:100%;width:25%;background:#4e9a70;border-radius:4px"></i></div>
<svg class="abs" style="left:843px;top:204.5px" width="13" height="13" viewBox="0 0 24 24" fill="none" stroke="#5faa4a" stroke-width="2.4" stroke-linecap="round" stroke-linejoin="round"><path d="M6 6l12 12"/><path d="M18 8v10H8"/></svg>
<svg class="abs" style="left:972px;top:204.5px" width="13" height="13" viewBox="0 0 24 24" fill="none" stroke="#5565bd" stroke-width="2.4" stroke-linecap="round" stroke-linejoin="round"><path d="M6 18L18 6"/><path d="M8 6h10v10"/></svg>
<svg class="abs" style="left:1117px;top:204px" width="15" height="15" viewBox="0 0 24 24" fill="none" stroke="#4a62b8" stroke-width="2" stroke-linecap="round" stroke-linejoin="round"><path d="M15 2h-4a2 2 0 0 0-2 2v11a2 2 0 0 0 2 2h8a2 2 0 0 0 2-2V8"/><path d="M16.700 2.200a2.400 2.400 0 0 0-1.700-.7V6a2 2 0 0 0 2 2h4.500a2.400 2.400 0 0 0-.7-1.700z"/><path d="M5 7a2 2 0 0 0-2 2v11a2 2 0 0 0 2 2h8a2 2 0 0 0 1.700-1"/></svg>
<svg class="abs" style="left:1216px;top:204px" width="15" height="15" viewBox="0 0 24 24" fill="none" stroke="#d98a4a" stroke-width="2" stroke-linecap="round" stroke-linejoin="round"><ellipse cx="12" cy="5" rx="9" ry="3"/><path d="M3 5v14a9 3 0 0 0 18 0V5"/><path d="M3 12a9 3 0 0 0 18 0"/></svg>
<div class="t" id="ls10" style="left:861px;top:202.75px;font-size:13px;color:#555">Data In: 850 GB</div>
<div class="t" id="ls11" style="left:990px;top:202.75px;font-size:13px;color:#555">Data Out: 1250 GB</div>
<div class="t" id="ls12" style="left:1136px;top:202.75px;font-size:13px;color:#555">Files: 8420</div>
<div class="t" id="ls13" style="left:1235px;top:202.75px;font-size:13px;color:#555">Buckets: 12</div>
</div>
<!--LOC-->
<!--FLOAT-->
<div class="abs" style="left:1860px;top:873px;width:40px;height:40px;border-radius:50%;background:#fff;border:1.500px solid #1c1c1c;box-shadow:0 2px 5px rgba(0,0,0,.18)"></div>
<svg class="abs" style="left:1871.0px;top:884.0px" width="18" height="18" viewBox="0 0 24 24" fill="none" stroke="#605f95" stroke-width="2.200" stroke-linecap="round" stroke-linejoin="round"><path d="M13.832 16.568a1 1 0 0 0 1.213-.303l.355-.465A2 2 0 0 1 17 15h3a2 2 0 0 1 2 2v3a2 2 0 0 1-2 2A18 18 0 0 1 2 4a2 2 0 0 1 2-2h3a2 2 0 0 1 2 2v3a2 2 0 0 1-.8 1.600l-.468.351a1 1 0 0 0-.292 1.233 14 14 0 0 0 6.392 6.384"/></svg>
<div class="abs" style="left:1860px;top:923px;width:40px;height:40px;border-radius:50%;background:#fff;border:1.500px solid #1c1c1c;box-shadow:0 2px 5px rgba(0,0,0,.18)"></div>
<svg class="abs" style="left:1872.0px;top:935.0px" width="16" height="16" viewBox="0 0 24 24" fill="none" stroke="#605f95" stroke-width="2.200" stroke-linecap="round" stroke-linejoin="round"><rect x="2" y="4" width="20" height="16" rx="2"/><path d="m22 7-8.970 5.700a1.940 1.940 0 0 1-2.060 0L2 7"/></svg>
<div class="abs" style="left:1860px;top:973px;width:40px;height:40px;border-radius:50%;background:#fff;border:1.500px solid #1c1c1c;box-shadow:0 2px 5px rgba(0,0,0,.18)"></div>
<svg class="abs" style="left:1872.0px;top:985.0px" width="16" height="16" viewBox="0 0 24 24" fill="none" stroke="#605f95" stroke-width="2.200" stroke-linecap="round" stroke-linejoin="round"><circle cx="12" cy="12" r="10"/><path d="M9.090 9a3 3 0 0 1 5.830 1c0 2-3 3-3 3"/><path d="M12 17h.01"/></svg>
<svg class="abs" style="left:1907px;top:114px" width="11" height="8" viewBox="0 0 11 8"><path d="M5.500 0.500 10.500 7.500H0.500z" fill="#8c8c8c"/></svg>
<svg class="abs" style="left:1907px;top:1019px" width="11" height="8" viewBox="0 0 11 8"><path d="M5.500 7.500 10.500 0.500H0.500z" fill="#8c8c8c"/></svg>
<!--FOOTER-->
<div class="abs" style="left:60px;top:1031px;width:1860px;height:1px;background:rgba(90,20,90,.4);z-index:3"></div>
<div class="abs" style="left:60px;top:1031px;width:1860px;height:49px;background:#e33ea6"></div>
<div class="abs" style="left:56px;top:0;width:4px;height:1031px;background:linear-gradient(90deg,rgba(30,10,80,0),rgba(30,10,80,.32))"></div>
<div class="abs" style="left:60px;top:0;width:5px;height:1031px;background:linear-gradient(90deg,rgba(40,20,90,.07),rgba(40,20,90,0))"></div>
<div class="t ft" id="f0" style="left:77px;top:1051px;letter-spacing:-0.07px">© 2025 Riverbed Technology. All rights reserved.</div>
<div class="t ft" id="f1" style="left:1623px;top:1051px;letter-spacing:-0.27px">Privacy Policy</div>
<div class="t ft" id="f2" style="left:1717px;top:1050px;color:#f7a6dc">|</div>
<div class="t ft" id="f3" style="left:1731px;top:1051px;letter-spacing:-0.27px">Terms of Service</div>
<div class="t ft" id="f4" style="left:1835px;top:1050px">|</div>
<div class="t ft" id="f5" style="left:1849px;top:1051px">Contact</div>
<div class="abs" style="left:0;top:1062px;width:102px;height:18px;background:#b9e5f3;border-top:1px solid #e4f5fa;border-right:1px solid #cfeaf3;border-radius:0 5px 0 0"></div>
<div class="t" id="stt" style="left:5.500px;top:1067px;font-size:12px;color:#2f4a52;letter-spacing:-0.2px">javascript:void(0);</div>
</body>
</html>
